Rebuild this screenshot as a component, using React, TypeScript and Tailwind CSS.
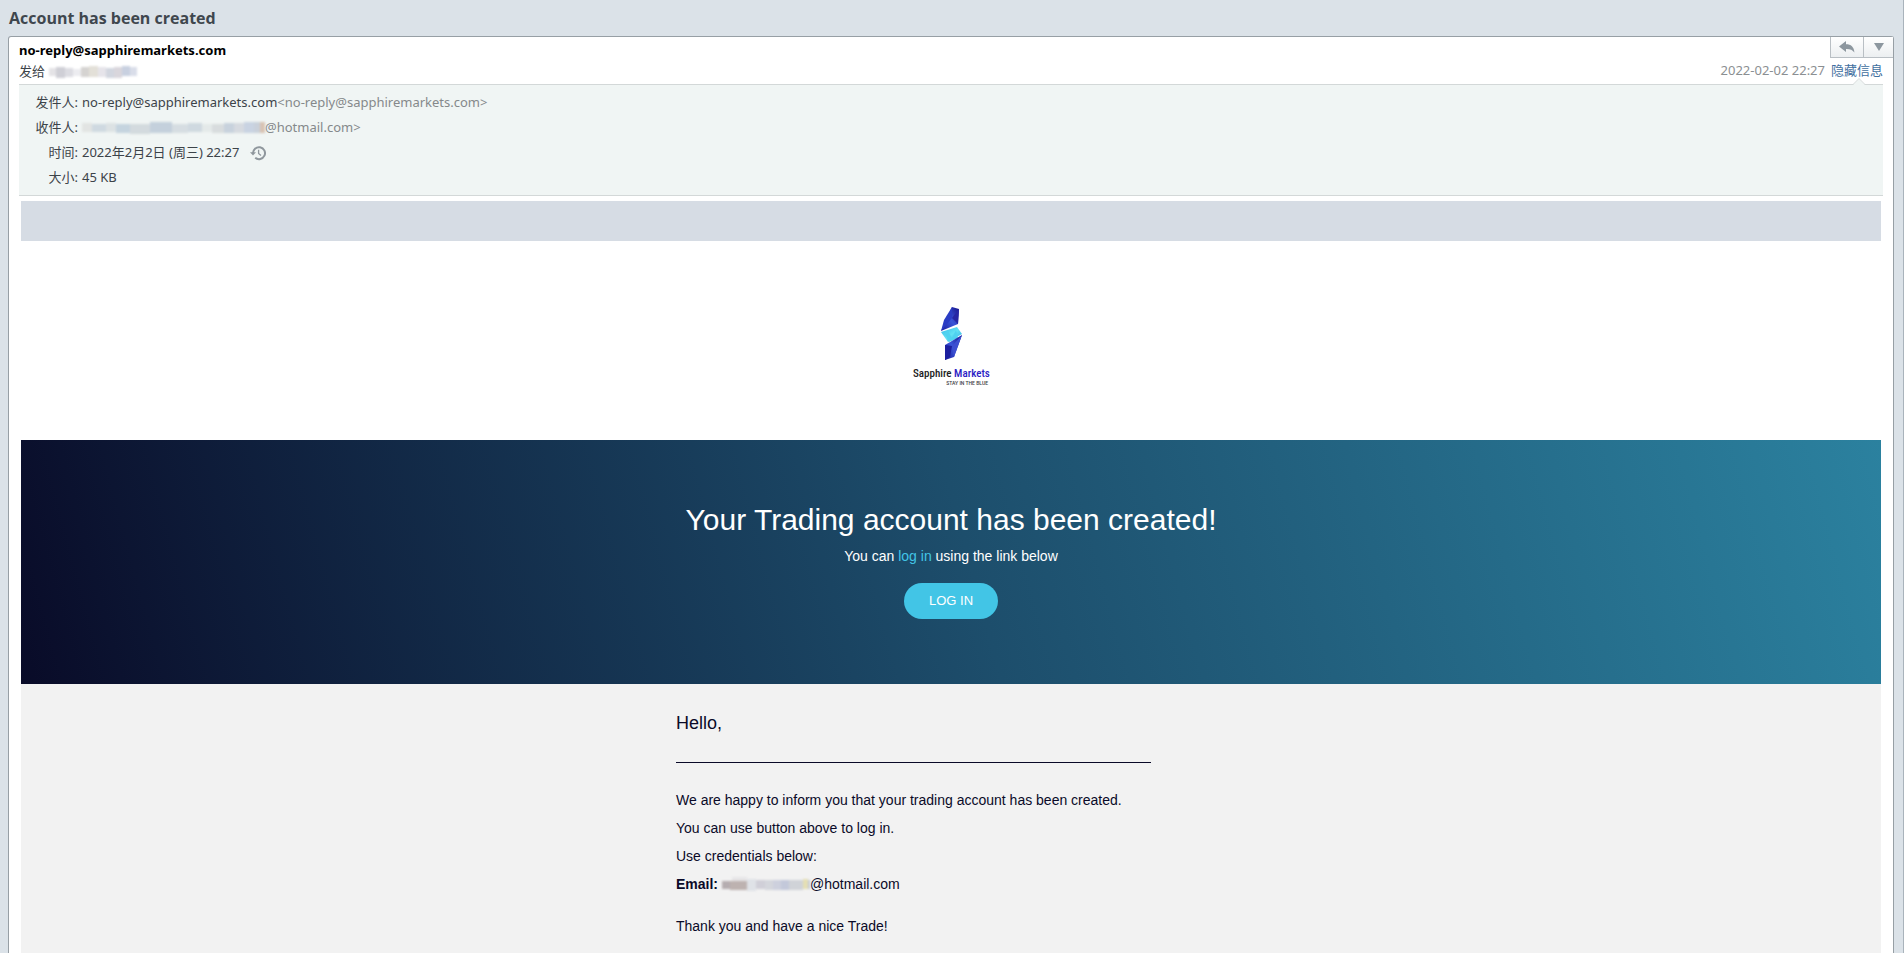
import type { ReactNode } from 'react'

type Cell = { x: number; y: number; w: number; h: number; fill: string }

const nameCells: Cell[] = [
  { x: 0, y: 3, w: 8, h: 8, fill: '#e4e3e6' },
  { x: 7, y: 2, w: 9, h: 11, fill: '#cfcfd6' },
  { x: 16, y: 3, w: 8, h: 9, fill: '#dcdce2' },
  { x: 24, y: 4, w: 8, h: 7, fill: '#ececf0' },
  { x: 32, y: 2, w: 8, h: 10, fill: '#d5d3d1' },
  { x: 40, y: 1, w: 9, h: 11, fill: '#e3e0d8' },
  { x: 49, y: 2, w: 8, h: 10, fill: '#e6e4ea' },
  { x: 57, y: 3, w: 8, h: 10, fill: '#d2d6df' },
  { x: 65, y: 2, w: 8, h: 11, fill: '#d9d6dc' },
  { x: 73, y: 1, w: 8, h: 10, fill: '#c8d0e0' },
  { x: 81, y: 2, w: 7, h: 9, fill: '#d9dde9' },
]

const recipientCells: Cell[] = [
  { x: 0, y: 2, w: 10, h: 9, fill: '#e2e4e3' },
  { x: 10, y: 3, w: 14, h: 8, fill: '#cfd9e1' },
  { x: 24, y: 2, w: 10, h: 9, fill: '#dce2e4' },
  { x: 34, y: 3, w: 14, h: 9, fill: '#c5d4df' },
  { x: 48, y: 3, w: 20, h: 10, fill: '#d3dade' },
  { x: 68, y: 1, w: 22, h: 11, fill: '#c4d0dc' },
  { x: 90, y: 3, w: 16, h: 9, fill: '#d6dde2' },
  { x: 106, y: 2, w: 14, h: 9, fill: '#cfd9e0' },
  { x: 120, y: 3, w: 10, h: 8, fill: '#e4e9e9' },
  { x: 130, y: 3, w: 12, h: 9, fill: '#d8dcde' },
  { x: 142, y: 2, w: 10, h: 10, fill: '#c8d2dd' },
  { x: 152, y: 2, w: 10, h: 10, fill: '#d6dae0' },
  { x: 162, y: 1, w: 10, h: 11, fill: '#c9d3e2' },
  { x: 172, y: 1, w: 6, h: 11, fill: '#c9d0da' },
  { x: 178, y: 1, w: 5, h: 11, fill: '#d8c3b4' },
]

const emailCells: Cell[] = [
  { x: 0, y: 4, w: 8, h: 8, fill: '#b5adb0' },
  { x: 8, y: 4, w: 17, h: 9, fill: '#bdb2b0' },
  { x: 10, y: 0, w: 15, h: 4, fill: '#e6e5e7' },
  { x: 25, y: 2, w: 9, h: 12, fill: '#dfe2e7' },
  { x: 34, y: 3, w: 9, h: 9, fill: '#d0cfd8' },
  { x: 43, y: 3, w: 8, h: 10, fill: '#d4d6dc' },
  { x: 51, y: 3, w: 8, h: 10, fill: '#cdd0dd' },
  { x: 59, y: 3, w: 8, h: 10, fill: '#c3c8da' },
  { x: 67, y: 3, w: 14, h: 10, fill: '#d0d3d8' },
  { x: 81, y: 2, w: 5, h: 10, fill: '#e5dfb4' },
  { x: 86, y: 3, w: 2, h: 9, fill: '#c3c9d8' },
]

// Redacted part of a name or an address. The cells run into each other a little.
function Mosaic({ cells, width }: { cells: Cell[]; width: number }) {
  return (
    <svg width={width} height={14} className="shrink-0 overflow-visible blur-[1px]" aria-hidden>
      {cells.map((c) => (
        <rect key={`${c.x}-${c.y}`} x={c.x} y={c.y} width={c.w} height={c.h} fill={c.fill} />
      ))}
    </svg>
  )
}

function Logo() {
  return (
    <svg width="80" height="82" viewBox="0 0 80 82" role="img" aria-label="Sapphire Markets">
      <defs>
        <linearGradient id="top" x1="0" y1="1" x2="1" y2="0">
          <stop offset="0" stopColor="#1b1d9c" />
          <stop offset="0.5" stopColor="#3a55d8" />
          <stop offset="1" stopColor="#17128a" />
        </linearGradient>
        <linearGradient id="mid" x1="0" y1="0" x2="1" y2="1">
          <stop offset="0" stopColor="#35b9e8" />
          <stop offset="0.5" stopColor="#62e2f4" />
          <stop offset="1" stopColor="#2fa5e0" />
        </linearGradient>
      </defs>
      <path d="M41 1 48 3 47 18 30 25Z" fill="url(#top)" />
      <path d="M41 1 41 12 30 25 33 14Z" fill="#2a3cc4" />
      <path d="M41 12 48 3 47 18Z" fill="#2626a4" />
      <path d="M30 26 46 21 51 28 37 36Z" fill="url(#mid)" />
      <path d="m37 25 4 7 4-8 2 8-9 4-4-8Z" fill="#4fd2f0" />
      <path d="M51 29 43 51 34 54 34 39Z" fill="url(#top)" />
      <path d="m34 39 7 1-2 11-5 3Z" fill="#1c1f9f" />
      <path d="M51 29 41 40 43 51Z" fill="#3d4fd0" />
      <text
        x="2"
        y="71"
        fontSize="11"
        fontWeight="500"
        fill="#1b1b22"
        fontFamily='"Roboto Condensed", Roboto, sans-serif'
      >
        Sapphire <tspan fill="#2c22c4">Markets</tspan>
      </text>
      <text x="77" y="79" fontSize="5" fontWeight="500" textAnchor="end" fill="#3c3c44" fontFamily="Roboto, sans-serif">
        STAY IN THE BLUE
      </text>
    </svg>
  )
}

function HistoryIcon() {
  return (
    <svg width="16" height="16" viewBox="0 0 16 16" fill="none" stroke="#8f979d" strokeWidth="2" aria-hidden>
      <path d="M3 8.5A6 6 0 1 1 5.2 12.8" />
      <path d="M0 7.200h6L3 10.600Z" fill="#8f979d" stroke="none" />
      <path d="M8.600 4.800V8.400L11 10.400" strokeWidth="1.300" />
    </svg>
  )
}

function Row({ label, children }: { label: string; children: ReactNode }) {
  return (
    <div className="flex h-[25px] items-center">
      <dt className="w-[63px] shrink-0 pr-1 text-right">{label}:</dt>
      <dd className="flex items-center">{children}</dd>
    </div>
  )
}

function App() {
  return (
    <div className="flex min-h-screen flex-col border-r border-[#a9b3bb] bg-[#dbe2e8] pr-[9px] pl-2 font-['Noto_Sans','Noto_Sans_CJK_SC',sans-serif] text-[13px] text-[#3c4349]">
      <h1 className="flex h-9 items-center pl-px font-['Open_Sans',sans-serif] text-base font-bold text-[#3f474e]">
        Account has been created
      </h1>

      <main className="flex grow flex-col rounded-t-[3px] border border-b-0 border-[#979fa5] bg-white">
        <header className="flex justify-between pl-[10px]">
          <div>
            <p className="pt-[2px] leading-[22px] font-bold text-black">no-reply@sapphiremarkets.com</p>
            <p className="flex h-[22px] items-center gap-1">
              <span>发给</span>
              <Mosaic cells={nameCells} width={90} />
            </p>
          </div>
          <div className="flex flex-col items-end">
            <div className="flex h-[21px] border-b border-l border-[#b9bfc4] bg-gradient-to-b from-white to-[#eceff1]">
              <button type="button" aria-label="Reply" className="flex w-8 items-center justify-center">
                <svg width="16" height="12" viewBox="0 0 16 12" fill="#8d979f">
                  <path d="M7 0v3.200c5 0 8 2.600 8.400 8.300C13.500 8.800 11 7.900 7 8v3L0 5.500Z" />
                </svg>
              </button>
              <button
                type="button"
                aria-label="More"
                className="flex w-[30px] items-center justify-center border-l border-[#b9bfc4]"
              >
                <svg width="10" height="8" viewBox="0 0 10 8" fill="#8d979f">
                  <path d="M0 0h10L5 8Z" />
                </svg>
              </button>
            </div>
            <p className="flex h-[26px] items-center gap-[6px] pr-[10px] text-[#8b8f92]">
              <time>2022-02-02 22:27</time>
              <a href="#" className="text-[#3f6f9f]">
                隐藏信息
              </a>
            </p>
          </div>
        </header>

        <section className="relative mx-[10px] border-y border-[#d3d8d8] bg-[#f0f5f4] py-[5px]">
          <svg width="12" height="7" viewBox="0 0 12 7" className="absolute -top-[7px] right-[18px]" aria-hidden>
            <path d="M0 7 6 1l6 6Z" fill="#f0f5f4" />
            <path d="M0 6.500 6 .5l6 6" fill="none" stroke="#d3d8d8" />
          </svg>
          <dl>
            <Row label="发件人">
              no-reply@sapphiremarkets.com<span className="text-[#85898b]">&lt;no-reply@sapphiremarkets.com&gt;</span>
            </Row>
            <Row label="收件人">
              <Mosaic cells={recipientCells} width={183} />
              <span className="text-[#85898b]">@hotmail.com&gt;</span>
            </Row>
            <Row label="时间">
              <span className="pr-[11px]">2022年2月2日 (周三) 22:27</span>
              <HistoryIcon />
            </Row>
            <Row label="大小">45 KB</Row>
          </dl>
        </section>

        <article className="mx-3 mt-[5px] flex grow flex-col font-['Liberation_Sans',Arial,sans-serif] text-[#0a0a28]">
          <div className="h-10 bg-[#d6dce4]" />
          <div className="flex h-[199px] items-center justify-center pt-3">
            <Logo />
          </div>

          <section className="flex h-[244px] flex-col items-center bg-[linear-gradient(75deg,#090b28_0%,#1d4e6c_51%,#2b819f_100%)] pt-[60px] text-white">
            <h2 className="text-[30px] leading-10">Your Trading account has been created!</h2>
            <p className="mt-1 text-sm leading-6">
              You can{' '}
              <a href="#" className="text-[#42c5e6]">
                log in
              </a>{' '}
              using the link below
            </p>
            <a href="#" className="mt-[15px] flex h-9 items-center rounded-full bg-[#42c5e6] px-[25px] text-[13px]">
              LOG IN
            </a>
          </section>

          <section className="grow bg-[#f2f2f2]">
            <div className="mx-auto w-[550px] pt-6 pb-3 text-sm leading-7">
              <p className="text-lg leading-[30px]">Hello,</p>
              <hr className="mt-6 mb-[23px] w-[475px] border-[#0a0a28]" />
              <p>We are happy to inform you that your trading account has been created.</p>
              <p>You can use button above to log in.</p>
              <p>Use credentials below:</p>
              <p className="flex items-center">
                <strong className="pr-1">Email:</strong>
                <Mosaic cells={emailCells} width={88} />
                @hotmail.com
              </p>
              <p className="mt-[14px]">Thank you and have a nice Trade!</p>
            </div>
          </section>
        </article>
      </main>
    </div>
  )
}

export default App
